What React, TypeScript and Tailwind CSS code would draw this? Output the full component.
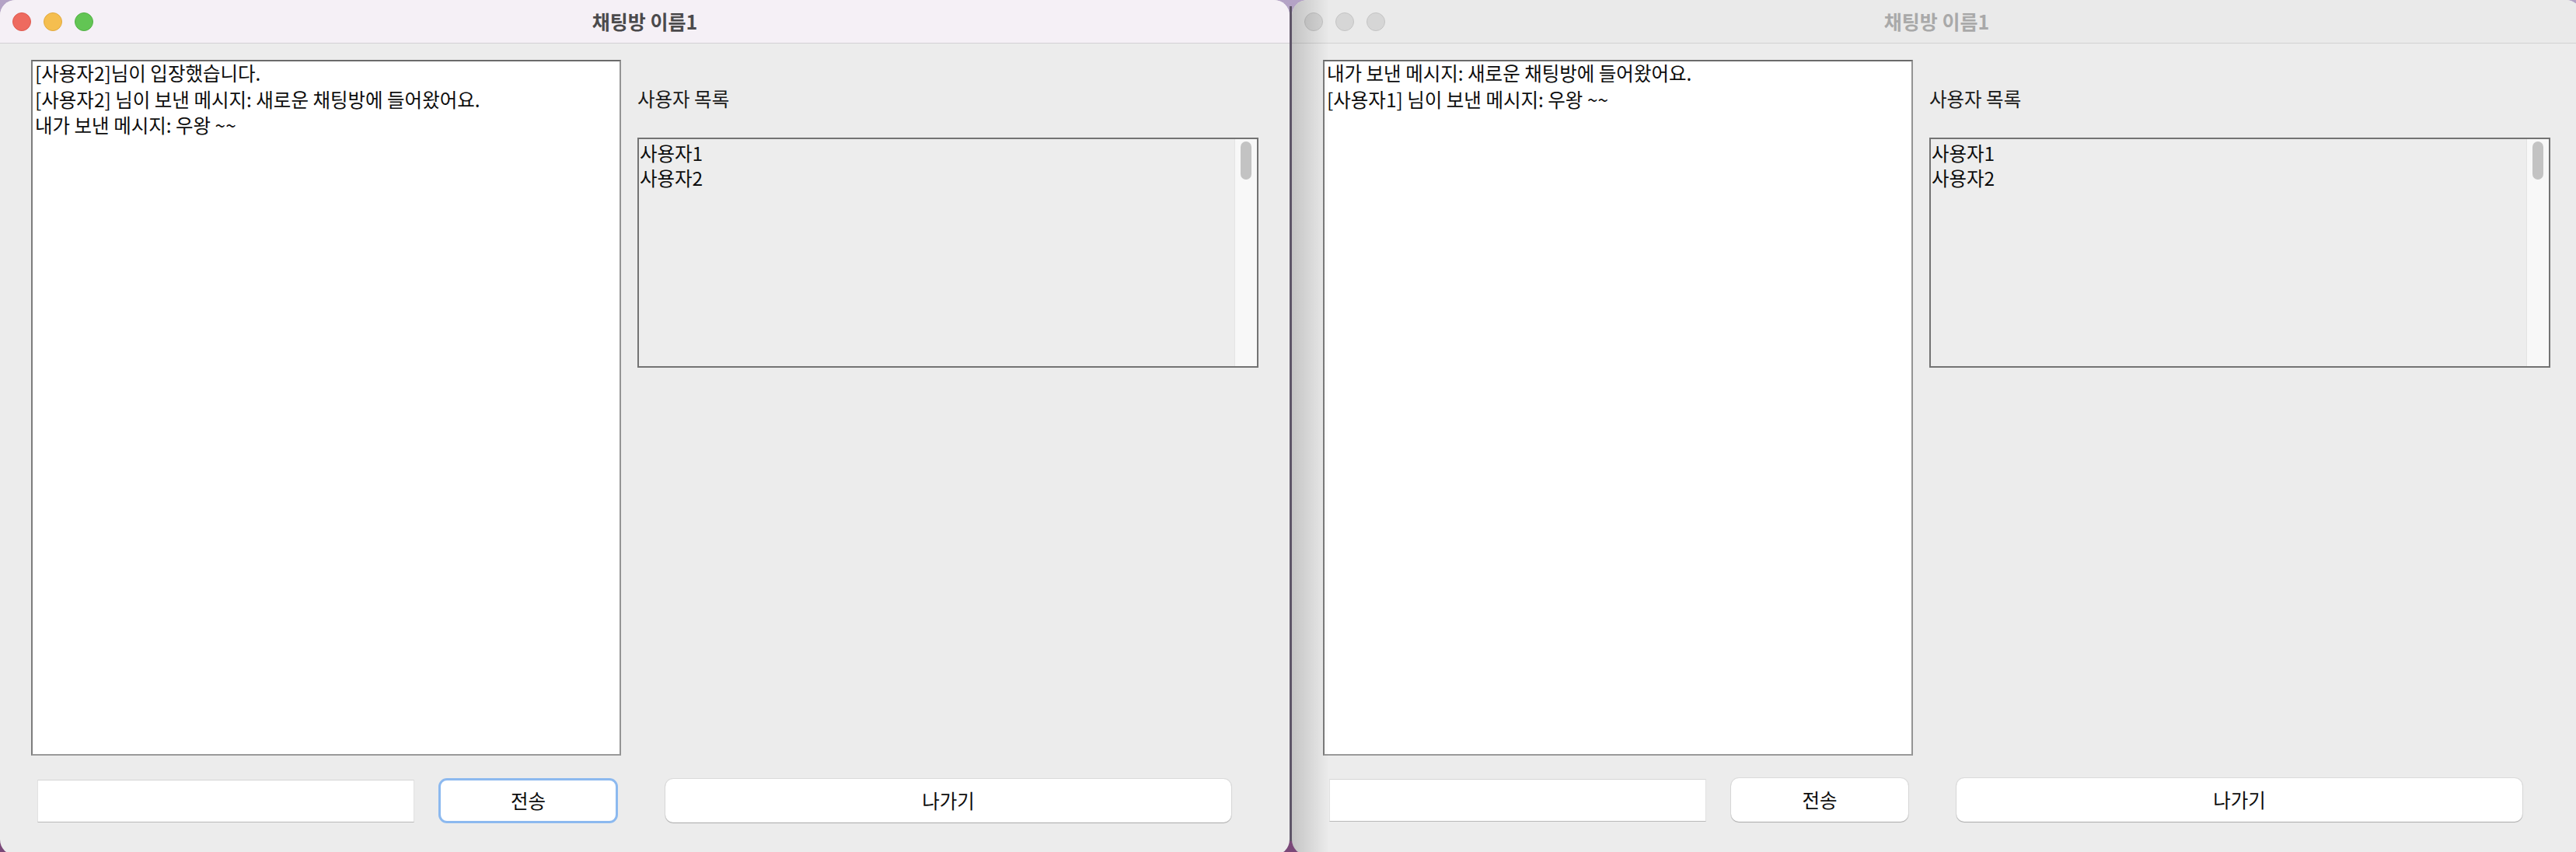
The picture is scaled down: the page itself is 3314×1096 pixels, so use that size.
import React from 'react'

const leftMessages = [
  '[사용자2]님이 입장했습니다.',
  '[사용자2] 님이 보낸 메시지: 새로운 채팅방에 들어왔어요.',
  '내가 보낸 메시지: 우왕 ~~',
]

const rightMessages = [
  '내가 보낸 메시지: 새로운 채팅방에 들어왔어요.',
  '[사용자1] 님이 보낸 메시지: 우왕 ~~',
]

const users = ['사용자1', '사용자2']

function TrafficLights({ active }: { active: boolean }) {
  if (!active) {
    return (
      <div className="flex gap-4 pl-4">
        <span className="h-6 w-6 rounded-full border border-[#c4c4c4] bg-[#d6d6d6]" />
        <span className="h-6 w-6 rounded-full border border-[#c4c4c4] bg-[#d6d6d6]" />
        <span className="h-6 w-6 rounded-full border border-[#c4c4c4] bg-[#d6d6d6]" />
      </div>
    )
  }
  return (
    <div className="flex gap-4 pl-4">
      <span className="h-6 w-6 rounded-full border border-[#de5a50] bg-[#ee6a5f]" />
      <span className="h-6 w-6 rounded-full border border-[#e0a93f] bg-[#f5be4f]" />
      <span className="h-6 w-6 rounded-full border border-[#52b045] bg-[#62c554]" />
    </div>
  )
}

function ChatWindow({ active, messages }: { active: boolean; messages: string[] }) {
  return (
    <div className="relative flex h-[1100px] w-[1659px] shrink-0 flex-col overflow-hidden rounded-[20px] bg-[#ececec]">
      {/* title bar */}
      <div
        className={
          active
            ? 'grid h-[56px] grid-cols-[1fr_auto_1fr] items-center border-b border-[#d3d0d5] bg-[#f5f0f6]'
            : 'grid h-[56px] grid-cols-[1fr_auto_1fr] items-center border-b border-[#d2d2d2] bg-[#eaeaea]'
        }
      >
        <TrafficLights active={active} />
        <div className={active ? 'text-[25px] font-bold text-[#4b4a4c]' : 'text-[25px] font-bold text-[#a9a9a9]'}>
          채팅방 이름1
        </div>
        <div />
      </div>

      <div className="flex flex-1 flex-col">
        <div className="flex pl-[40px] pt-[21px]">
          {/* chat log */}
          <div className="h-[895px] w-[759px] overflow-hidden border-2 border-t-[#6a6a6a] border-l-[#7c7c7c] border-r-[#939393] border-b-[#9a9a9a] bg-white pl-[3px] text-[24.5px] leading-[33.5px] text-[#0d0d0d]">
            <div className="-mt-[2px]">
              {messages.map((m, i) => (
                <div key={i}>{m}</div>
              ))}
            </div>
          </div>

          {/* user list */}
          <div className="ml-[21px] flex w-[799px] flex-col">
            <div className="mt-[33px] h-[34px] text-[24.5px] leading-[34px] text-[#1a1a1a]">사용자 목록</div>
            <div className="mt-[33px] flex h-[296px] border-2 border-[#737373] bg-[#ededed]">
              <div className="flex-1 pl-px pt-[2px] text-[24.5px] leading-[32px] text-[#0d0d0d]">
                {users.map((u) => (
                  <div key={u}>{u}</div>
                ))}
              </div>
              <div className="flex w-[29px] justify-center border-l border-[#e4e4e4] bg-[#f8f8f8] pt-[3px]">
                <div className="h-[49px] w-[14px] rounded-full bg-[#c3c3c3]" />
              </div>
            </div>
          </div>
        </div>

        {/* bottom controls */}
        <div className="mt-[29px] flex items-center">
          <div className="ml-[48px] h-[55px] w-[485px] border border-[#e2e2e2] border-t-[#d6d6d6] border-b-[#b9b9b9] bg-white" />
          <button
            className={
              active
                ? 'ml-[31px] h-[58px] w-[231px] rounded-[11px] border-[3px] border-[#8cb9ef] bg-white text-[24.5px] text-[#0d0d0d]'
                : 'ml-[32px] h-[56px] w-[228px] rounded-[10px] bg-white text-[24.5px] text-[#0d0d0d] shadow-[0_0_0_1px_rgba(0,0,0,0.07),0_1px_1px_rgba(0,0,0,0.22)]'
            }
          >
            전송
          </button>
          <button
            className={
              active
                ? 'ml-[61px] h-[56px] w-[728px] rounded-[10px] bg-white text-[24.5px] text-[#0d0d0d] shadow-[0_0_0_1px_rgba(0,0,0,0.07),0_1px_1px_rgba(0,0,0,0.22)]'
                : 'ml-[62px] h-[56px] w-[728px] rounded-[10px] bg-white text-[24.5px] text-[#0d0d0d] shadow-[0_0_0_1px_rgba(0,0,0,0.07),0_1px_1px_rgba(0,0,0,0.22)]'
            }
          >
            나가기
          </button>
        </div>
      </div>

      {/* shadow cast by the front window */}
      {!active && (
        <div className="pointer-events-none absolute bottom-0 left-0 top-0 w-[48px] bg-linear-to-r from-[rgba(0,0,0,0.17)] to-transparent" />
      )}
    </div>
  )
}

export default function App() {
  return (
    <div className="flex h-[1096px] w-[3314px] overflow-hidden bg-linear-to-b from-[#b4a3c6] to-[#7a4878] font-['Noto_Sans_CJK_KR',sans-serif]">
      <ChatWindow active messages={leftMessages} />
      <div className="mb-[14px] mt-[8px] w-[3px] shrink-0 bg-[#5e5568]" />
      <ChatWindow active={false} messages={rightMessages} />
    </div>
  )
}
